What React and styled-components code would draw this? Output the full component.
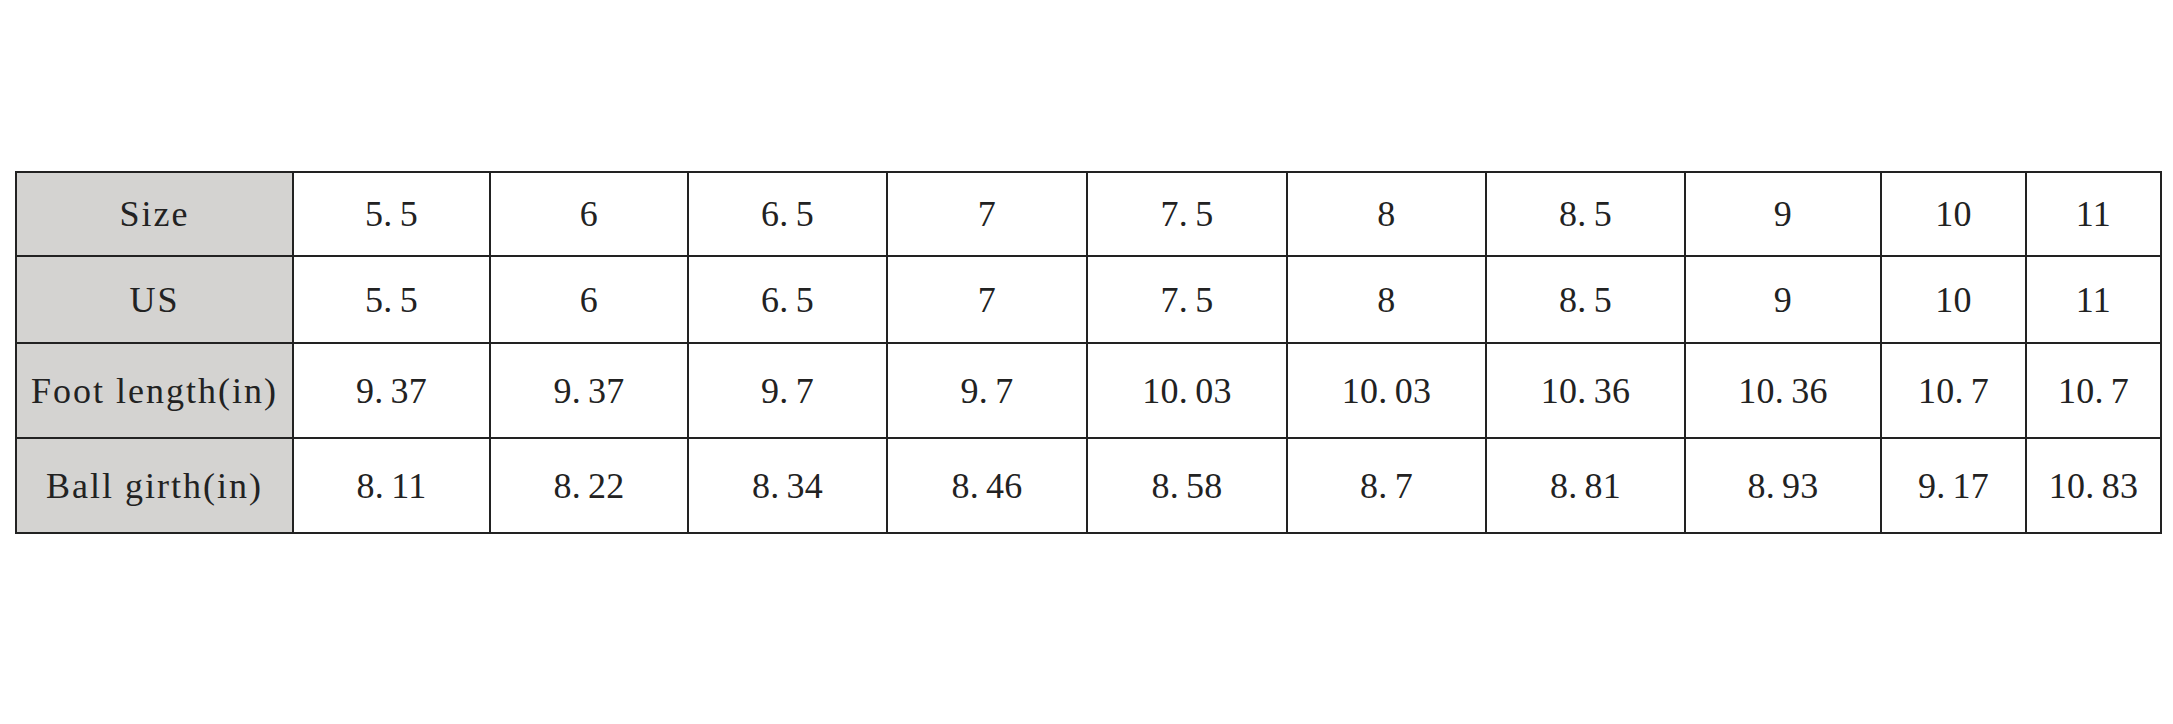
import React from "react";
import styled, { createGlobalStyle } from "styled-components";

const Global = createGlobalStyle`
  html, body { margin: 0; padding: 0; background: #ffffff; }
  body { font-family: "Liberation Serif", "Times New Roman", serif; }
`;

const Page = styled.div`
  width: 2173px;
  height: 724px;
  box-sizing: border-box;
  padding: 171px 0 0 15px;
  background: #ffffff;
`;

const Table = styled.table`
  border-collapse: collapse;
  table-layout: fixed;
  width: 2145px;
`;

const Row = styled.tr`
  height: ${(p) => p.$h}px;
`;

const Cell = styled.td`
  border: 2px solid #222222;
  padding: 0;
  text-align: center;
  vertical-align: middle;
  font-family: "Liberation Serif", "Times New Roman", serif;
  font-weight: 400;
  font-size: 36px;
  color: #222222;
  letter-spacing: ${(p) => (p.$head ? "2px" : "0.3px")};
  background: ${(p) => (p.$head ? "#d4d3d1" : "#ffffff")};
  white-space: nowrap;
`;

const Dot = styled.span`
  margin-right: 7px;
`;

const widths = [277, 197, 198, 199, 200, 200, 199, 199, 196, 145, 135];

const rows = [
  { label: "Size", h: 84, values: ["5.5", "6", "6.5", "7", "7.5", "8", "8.5", "9", "10", "11"] },
  { label: "US", h: 87, values: ["5.5", "6", "6.5", "7", "7.5", "8", "8.5", "9", "10", "11"] },
  { label: "Foot length(in)", h: 95, values: ["9.37", "9.37", "9.7", "9.7", "10.03", "10.03", "10.36", "10.36", "10.7", "10.7"] },
  { label: "Ball girth(in)", h: 95, values: ["8.11", "8.22", "8.34", "8.46", "8.58", "8.7", "8.81", "8.93", "9.17", "10.83"] },
];

function Num({ text }) {
  const parts = text.split(".");
  if (parts.length === 1) return <>{text}</>;
  return (
    <>
      {parts[0]}
      <Dot>.</Dot>
      {parts[1]}
    </>
  );
}

export default function App() {
  return (
    <Page>
      <Global />
      <Table>
        <colgroup>
          {widths.map((w, i) => (
            <col key={i} style={{ width: w }} />
          ))}
        </colgroup>
        <tbody>
          {rows.map((r) => (
            <Row key={r.label} $h={r.h}>
              <Cell $head>{r.label}</Cell>
              {r.values.map((v, i) => (
                <Cell key={i}>
                  <Num text={v} />
                </Cell>
              ))}
            </Row>
          ))}
        </tbody>
      </Table>
    </Page>
  );
}
